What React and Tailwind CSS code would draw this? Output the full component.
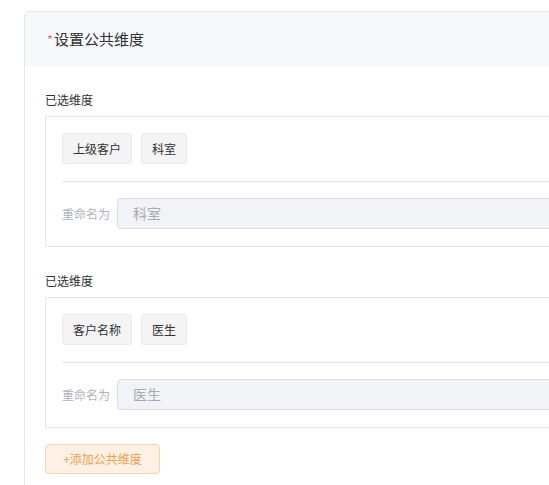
export default function App() {
  const sections = [
    { tags: ["上级客户", "科室"], name: "科室" },
    { tags: ["客户名称", "医生"], name: "医生" },
  ];
  return (
    <div
      className="w-[549px] h-[485px] overflow-hidden bg-white pl-[24px] pt-[11px]"
      style={{ fontFamily: '"Noto Sans CJK SC", "Noto Sans", sans-serif' }}
    >
      <div className="w-[600px] h-[520px] border border-[#e4e7ed] rounded-[4px] bg-white">
        <div className="h-[54px] bg-[#f7f8fa] rounded-t-[4px] flex items-center pl-[22px] text-[15px] text-[#303133]">
          <span className="text-[#f56c6c] text-[13px] mr-[1px] mt-[2px]">*</span>
          <span>设置公共维度</span>
        </div>
        <div className="pl-[20px] pt-[24px]">
          {sections.map((s, i) => (
            <div key={i} className={i > 0 ? "mt-[24px]" : ""}>
              <div className="h-[20px] leading-[20px] text-[12px] text-[#303133]">已选维度</div>
              <div className="mt-[6px] border border-[#e4e7ed] pt-4 pl-4 pb-[17px]">
                <div className="flex gap-[9px]">
                  {s.tags.map((t) => (
                    <div
                      key={t}
                      className="h-[31px] px-[10px] flex items-center rounded-[3px] border border-[#ebebed] bg-[#f4f4f5] text-[12px] text-[#303133]"
                    >
                      {t}
                    </div>
                  ))}
                </div>
                <div className="mt-[17px] h-px bg-[#e4e7ed]" />
                <div className="mt-[16px] flex items-center">
                  <span className="w-[48px] text-[12px] text-[#b1b3b8] whitespace-nowrap">重命名为</span>
                  <div className="ml-[7px] flex-1 h-[31px] rounded-[4px] border border-[#dcdfe6] bg-[#f2f3f6] flex items-center pl-[15px] text-[14px] text-[#a8abb2]">
                    {s.name}
                  </div>
                </div>
              </div>
            </div>
          ))}
          <button className="mt-[16px] h-[30px] w-[115px] rounded-[4px] border border-[#f8d4a8] bg-[#fdf0e5] text-[12px] text-[#f0a04b] flex items-center justify-center">
            +添加公共维度
          </button>
        </div>
      </div>
    </div>
  );
}
